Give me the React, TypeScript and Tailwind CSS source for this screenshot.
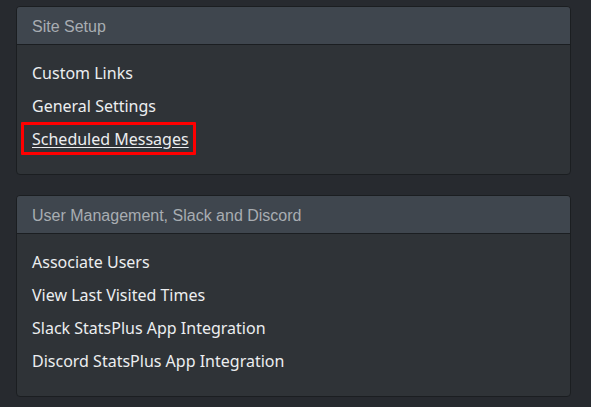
const siteSetup = ["Custom Links", "General Settings", "Scheduled Messages"];
const userMgmt = [
  "Associate Users",
  "View Last Visited Times",
  "Slack StatsPlus App Integration",
  "Discord StatsPlus App Integration",
];

function Card({ title, links, active }: { title: string; links: string[]; active?: string }) {
  return (
    <div className="overflow-hidden rounded-[4px] border border-[#1b1e21] bg-[#2f3337]">
      <div className="flex h-[38px] items-center border-b border-[#1b1e21] bg-[#3f464e] px-[15px] pt-[3px] font-['Liberation_Sans',sans-serif] text-[16px] text-[#a8adb2]">
        {title}
      </div>
      <ul className="px-[15px] pt-[11px] pb-[19px] font-['Noto_Sans',sans-serif] text-[16px] text-[#eceef0]">
        {links.map((l) => (
          <li key={l} className="flex h-[33px] items-center">
            {l === active ? (
              <span className="-ml-[11px] flex h-[33px] items-center rounded-[1px] border-[3px] border-[#ff0000] pr-[4px] pl-[8px]">
                <a href="#" className="underline underline-offset-2">
                  {l}
                </a>
              </span>
            ) : (
              <a href="#">{l}</a>
            )}
          </li>
        ))}
      </ul>
    </div>
  );
}

export default function App() {
  return (
    <div className="flex min-h-[407px] flex-col gap-[20px] bg-[#272a2f] pt-[6px] pr-[20px] pl-[16px]">
      <Card title="Site Setup" links={siteSetup} active="Scheduled Messages" />
      <Card title="User Management, Slack and Discord" links={userMgmt} />
    </div>
  );
}
